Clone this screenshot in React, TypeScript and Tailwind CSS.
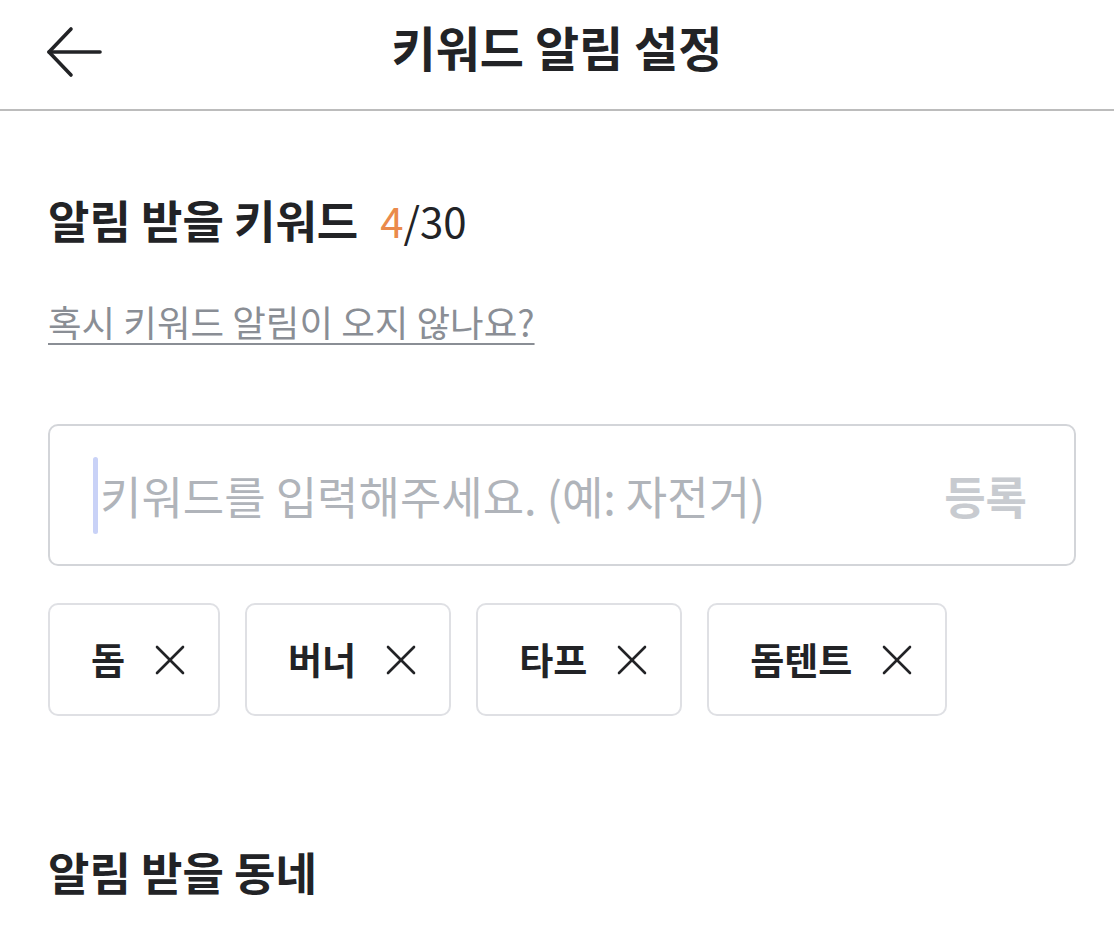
import React from 'react';

const FONT = "font-['Noto_Sans_CJK_KR','Noto_Sans',sans-serif]";

const keywords = ['돔', '버너', '타프', '돔텐트'];

const BackArrow: React.FC = () => (
  <svg width="58" height="52" viewBox="0 0 58 52" fill="none" stroke="#222326" strokeWidth="3.6" strokeLinecap="round" strokeLinejoin="round">
    <path d="M3 26H54" />
    <path d="M25 3L3 26L25 49" />
  </svg>
);

const CloseIcon: React.FC = () => (
  <svg width="30" height="30" viewBox="0 0 30 30" fill="none" stroke="#222326" strokeWidth="2.6" strokeLinecap="round">
    <path d="M2 2L28 28" />
    <path d="M28 2L2 28" />
  </svg>
);

const KeywordChip: React.FC<{ label: string }> = ({ label }) => (
  <div className="flex h-[113px] items-center gap-[30px] rounded-[10px] border-2 border-[#dfe0e4] bg-white pl-[41px] pr-[33px]">
    <span className="text-[37px] font-bold leading-none text-[#222326]">{label}</span>
    <CloseIcon />
  </div>
);

export default function App() {
  return (
    <div className={`${FONT} min-h-[949px] w-[1114px] bg-white text-[#222326]`}>
      {/* Header */}
      <header className="grid h-[111px] grid-cols-[1fr_auto_1fr] items-center border-b-2 border-[#bcbcbc] px-[46px] pb-[18px]">
        <button className="mt-[12px] flex items-center justify-self-start">
          <BackArrow />
        </button>
        <h1 className="text-[48px] font-bold leading-none">키워드 알림 설정</h1>
        <div />
      </header>

      <main className="pl-[48px] pr-[38px]">
        {/* Keyword section */}
        <section className="pt-[82px]">
          <div className="flex items-center gap-[22px] leading-[54px]">
            <h2 className="text-[45px] font-bold">알림 받을 키워드</h2>
            <span className="text-[42px]">
              <span className="text-[#ea8a4b]">4</span>/30
            </span>
          </div>

          <a className="mt-[53px] inline-block text-[36.5px] leading-[44px] text-[#8a8e95] underline decoration-2 underline-offset-[6px]">
            혹시 키워드 알림이 오지 않나요?
          </a>

          {/* Input */}
          <div className="mt-[80px] flex h-[142px] items-center rounded-[10px] border-2 border-[#d3d5d9] pl-[43px] pr-[47px]">
            <span className="h-[77px] w-[5px] rounded-full bg-[#c9d2f7]" />
            <span className="ml-[2px] flex-1 text-[45px] leading-none text-[#b0b4ba]">
              키워드를 입력해주세요. (예: 자전거)
            </span>
            <span className="text-[45px] font-bold leading-none text-[#c8cbd0]">등록</span>
          </div>

          {/* Chips */}
          <div className="mt-[37px] flex flex-wrap gap-[25px]">
            {keywords.map(k => (
              <KeywordChip key={k} label={k} />
            ))}
          </div>
        </section>

        {/* Area section */}
        <section className="pt-[129px]">
          <h2 className="text-[45px] font-bold leading-[54px]">알림 받을 동네</h2>
        </section>
      </main>
    </div>
  );
}
